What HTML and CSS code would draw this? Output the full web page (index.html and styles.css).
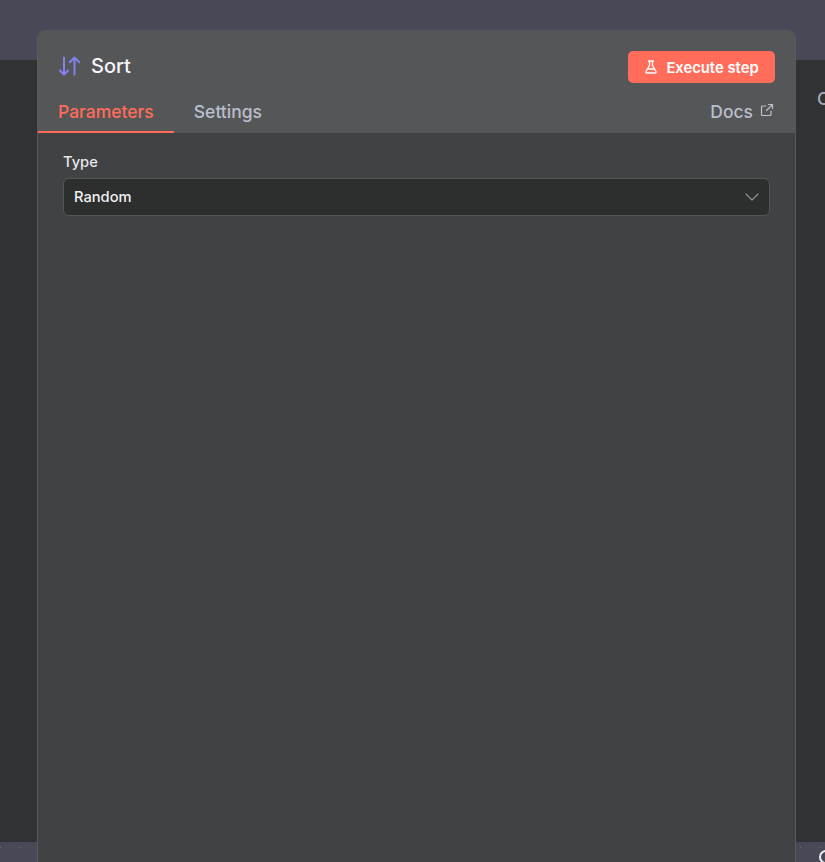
FILE: index.html
```html
<!DOCTYPE html>
<html lang="en">
<head>
<meta charset="utf-8">
<title>Sort</title>
<link rel="stylesheet" href="styles.css">
</head>
<body>
<div class="backdrop">
  <div class="band band-top"></div>
  <div class="middle"><span class="side-label">Output</span></div>
  <div class="band band-bottom">
    <span class="dot dot-a"></span><span class="dot dot-b"></span>
    <span class="dot dot-c"></span><span class="dot dot-d"></span>
    <span class="ring"></span>
  </div>
</div>
<section class="modal">
  <header class="head">
    <div class="title-row">
      <div class="title">
        <svg class="sort-icon" width="23" height="20" viewBox="0 0 23 20" fill="none" stroke="currentColor" stroke-width="2" stroke-linecap="round" stroke-linejoin="round">
          <path d="M6 1.500V18.500M2 14.500l4 4 4-4"/>
          <path d="M16.500 18.500V1.500M11.800 6.200l4.700-4.700 4.700 4.700"/>
        </svg>
        <span class="title-text">Sort</span>
      </div>
      <button class="exec">
        <svg width="14" height="14" viewBox="0 0 14 14" fill="none" stroke="currentColor" stroke-width="1.300" stroke-linecap="round" stroke-linejoin="round">
          <path d="M4.500 1h5M5.500 1v4.500L2 11.500c-.4.800.1 1.500 1 1.500h8c.9 0 1.400-.7 1-1.500L8.500 5.500V1M3.700 9h6.600"/>
        </svg>
        <span class="exec-label">Execute step</span>
      </button>
    </div>
    <nav class="tabs">
      <a class="tab active">Parameters</a>
      <a class="tab">Settings</a>
      <a class="docs">Docs
        <svg width="14" height="14" viewBox="0 0 14 14" fill="none" stroke="currentColor" stroke-width="1.200" stroke-linecap="round" stroke-linejoin="round">
          <path d="M11 8v3.500a1 1 0 0 1-1 1H2.500a1 1 0 0 1-1-1V4a1 1 0 0 1 1-1H6M8.500 1.500h4v4M12.500 1.500 6.500 7.500"/>
        </svg>
      </a>
    </nav>
  </header>
  <div class="body">
    <label class="field-label">Type</label>
    <div class="select">
      <span class="select-value">Random</span>
      <svg width="14" height="8" viewBox="0 0 14 8" fill="none" stroke="currentColor" stroke-width="1.200" stroke-linecap="round" stroke-linejoin="round">
        <path d="M1 1l6 6 6-6"/>
      </svg>
    </div>
  </div>
</section>
</body>
</html>
```
FILE: styles.css
```css
* { box-sizing: border-box; }
html, body { margin: 0; height: 100%; overflow: hidden; }
body { font-family: Inter, "Liberation Sans", sans-serif; background: #313233; position: relative; }

.backdrop { height: 862px; display: flex; flex-direction: column; }
.band { background: #484856; }
.band-top { height: 60px; }
.band-bottom { height: 20px; position: relative; overflow: hidden; }
.middle { flex: 1; background: #313233; display: flex; justify-content: flex-end; overflow: hidden; }
.side-label { width: 8px; margin-top: 28px; overflow: hidden; font-size: 17.600px; font-weight: 500; line-height: 22px; color: #a8abb5; }

.dot { position: absolute; top: 5px; width: 1px; height: 1px; background: #6b6b78; }
.dot-a { left: 0; }
.dot-b { left: 20px; }
.dot-c { left: 800px; }
.dot-d { left: 820px; }
.ring { position: absolute; left: 819px; top: 8px; width: 14px; height: 14px; border: 2px solid #eee; border-radius: 50%; }

.modal { position: absolute; left: 37px; top: 30px; width: 759px; height: 900px; border-radius: 8px 8px 0 0; border: 1px solid #58595a; border-top: 0; background: #414243; overflow: hidden; }

.head { height: 103px; background: #555657; display: flex; flex-direction: column; }
.title-row { display: flex; justify-content: space-between; align-items: flex-start; padding: 21px 20px 0 20px; height: 68px; }
.title { display: flex; align-items: center; gap: 10px; height: 30px; }
.title-text { font-size: 20px; font-weight: 500; color: #f5f5f7; line-height: 28px; }
.sort-icon { color: #8080f0; }

.exec { height: 32px; width: 147px; border: 0; border-radius: 5px; background: #ff6d5a; color: #fff; font: 600 14.800px Inter, "Liberation Sans", sans-serif; display: flex; align-items: center; justify-content: center; gap: 8px; padding: 0; }
.exec-label { margin-top: 1px; }

.tabs { flex: 1; display: flex; align-items: stretch; padding-right: 21px; }
.tab { font-size: 17.500px; font-weight: 500; color: #b9bfcc; padding: 2px 20px 0; line-height: 24px; }
.tab.active { color: #ff6d5a; border-bottom: 2px solid #ff6d5a; }
.docs { margin-left: auto; display: flex; align-items: flex-start; gap: 7px; font-size: 17.500px; font-weight: 500; color: #b9bfcc; padding-top: 2px; line-height: 24px; }
.docs svg { margin-top: 3px; }

.body { padding: 19px 25px; }
.field-label { display: block; font-size: 14.700px; font-weight: 500; color: #e6e7ea; line-height: 20px; margin-bottom: 6px; }
.select { height: 38px; background: #2d2e2e; border: 1px solid #555657; border-radius: 6px; padding: 0 10px; display: flex; justify-content: space-between; align-items: center; font-size: 14.700px; font-weight: 500; color: #f0f0f2; }
.select-value { margin-top: -1px; }
.select svg { color: #8d8f99; }
```
